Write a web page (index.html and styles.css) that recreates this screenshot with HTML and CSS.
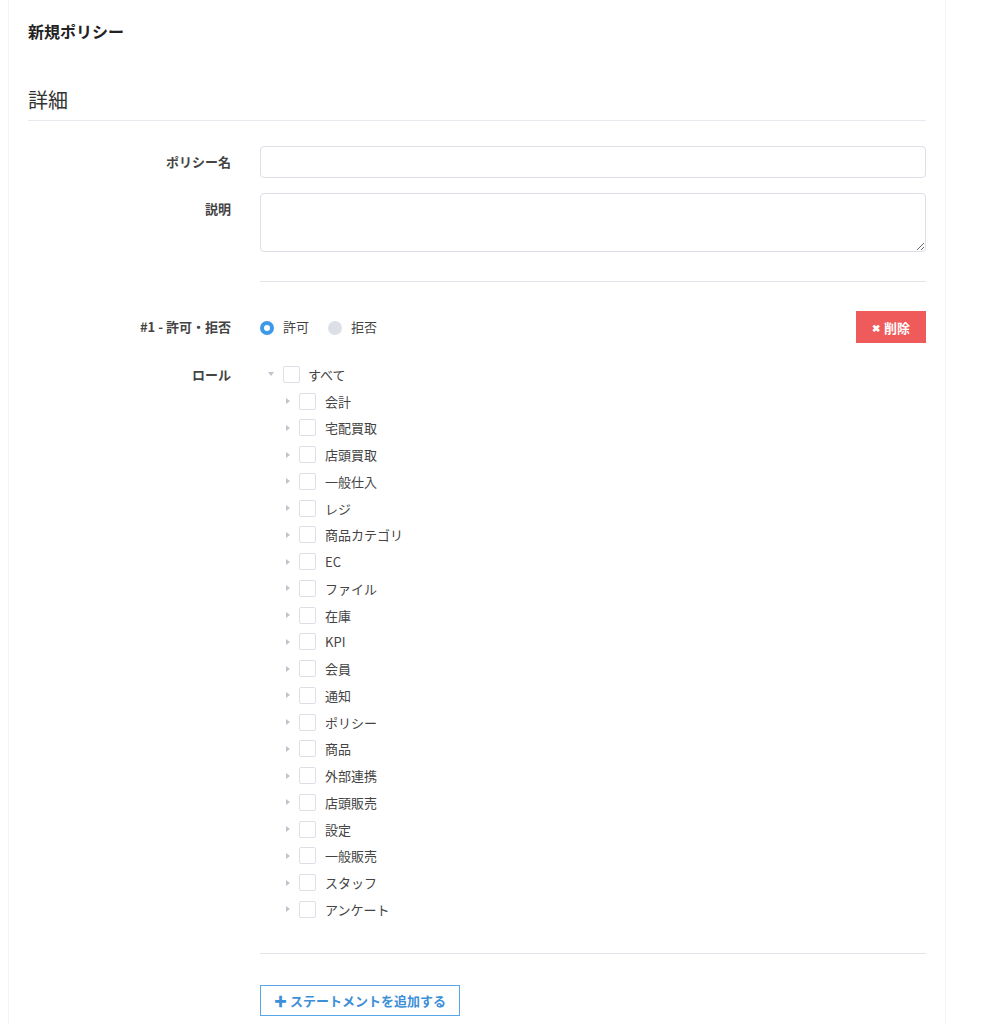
FILE: index.html
```html
<!DOCTYPE html>
<html lang="ja">
<head>
    <meta charset="UTF-8">
    <title>新規ポリシー</title>
    <link rel="stylesheet" href="styles.css">
</head>
<body>
<div class="page">
    <h1 class="page-title">新規ポリシー</h1>

    <h2 class="section-title">詳細</h2>

    <div class="form-row">
        <label class="form-label" for="policy_name">ポリシー名</label>
        <div class="form-field"><input type="text" id="policy_name" class="text-input"></div>
    </div>
    <div class="form-row">
        <label class="form-label" for="policy_desc">説明</label>
        <div class="form-field"><textarea id="policy_desc" class="text-area"></textarea></div>
    </div>

    <div class="form-row">
        <div></div>
        <div class="form-field"><hr class="divider"></div>
    </div>

    <div class="form-row statement-row">
        <div class="form-label">#1 - 許可・拒否</div>
        <div class="form-field effect-line">
            <div class="radios">
                <span class="radio checked"><span class="radio-dot"></span>許可</span>
                <span class="radio"><span class="radio-dot"></span>拒否</span>
            </div>
            <button class="btn-delete"><span class="x">✖</span>削除</button>
        </div>
    </div>

    <div class="form-row role-row">
        <div class="form-label">ロール</div>
        <div class="form-field">
            <div class="tree-node root">
                <span class="caret open"></span><span class="check"></span><span class="node-label">すべて</span>
            </div>
            <div class="tree-children" id="roleTree"></div>
        </div>
    </div>

    <div class="form-row">
        <div></div>
        <div class="form-field"><hr class="divider bottom"></div>
    </div>

    <div class="form-row">
        <div></div>
        <div class="form-field"><button class="btn-add"><span class="plus">✚</span>ステートメントを追加する</button></div>
    </div>
</div>

<script>
    const roles = ['会計', '宅配買取', '店頭買取', '一般仕入', 'レジ', '商品カテゴリ', 'EC', 'ファイル', '在庫', 'KPI',
        '会員', '通知', 'ポリシー', '商品', '外部連携', '店頭販売', '設定', '一般販売', 'スタッフ', 'アンケート'];
    const tree = document.getElementById('roleTree');
    tree.innerHTML = roles.map(name => `
        <div class="tree-node">
            <span class="caret"></span><span class="check"></span><span class="node-label">${name}</span>
        </div>
    `).join('');
</script>
</body>
</html>
```

FILE: styles.css
```css
body {
    margin: 0;
    font-family: "Noto Sans CJK JP", "Noto Sans", sans-serif;
    color: #333;
    background: #fff;
}

.page {
    margin-left: 8px;
    width: 898px;
    min-height: 1024px;
    padding: 0 19px;
    border-left: 1px solid #f4f4f6;
    border-right: 1px solid #f4f4f6;
    box-sizing: content-box;
}

.page-title {
    margin: 0;
    padding-top: 20px;
    font-size: 16px;
    line-height: 22px;
    font-weight: bold;
    color: #222;
}

.section-title {
    margin: 44px 0 0;
    font-size: 20px;
    font-weight: normal;
    line-height: 28px;
    color: #333;
    padding-bottom: 6px;
    border-bottom: 1px solid #e8e8ee;
}

.form-row {
    display: grid;
    grid-template-columns: 203px 1fr;
    column-gap: 29px;
}

.form-row:nth-of-type(1) {
    margin-top: 25px;
}

.form-label {
    text-align: right;
    font-size: 13px;
    font-weight: bold;
    color: #444;
    line-height: 20px;
    padding-top: 6px;
}

.text-input, .text-area {
    display: block;
    width: 100%;
    box-sizing: border-box;
    border: 1px solid #dcdfe6;
    border-radius: 4px;
    font-family: inherit;
    font-size: 13px;
    background: #fff;
}

.text-input {
    height: 32px;
    margin-bottom: 15px;
}

.text-area {
    height: 59px;
    resize: vertical;
}

.divider {
    margin: 29px 0 0;
    border: 0;
    border-top: 1px solid #e4e4ea;
}

.statement-row {
    margin-top: 29px;
}

.effect-line {
    display: flex;
    justify-content: space-between;
    align-items: center;
}

.radios {
    display: flex;
    gap: 19px;
    font-size: 13px;
    line-height: 16px;
    color: #444;
}

.radio {
    display: flex;
    align-items: center;
}

.radio-dot {
    width: 14px;
    height: 14px;
    border-radius: 50%;
    background: #dcdfe6;
    margin-right: 9px;
    box-sizing: border-box;
    position: relative;
    top: 1px;
}

.radio.checked .radio-dot {
    background: #fff;
    border: 4px solid #3d99e8;
}

.btn-delete {
    width: 70px;
    height: 32px;
    background: #ef5a5a;
    color: #fff;
    border: none;
    font-family: inherit;
    font-size: 13px;
    font-weight: bold;
    padding: 0;
    cursor: pointer;
}

.btn-delete .x {
    font-size: 10px;
    margin-right: 4px;
    position: relative;
    top: -1px;
}

.role-row {
    margin-top: 18px;
}

.role-row .form-label {
    padding-top: 4px;
}

.tree-node {
    display: flex;
    align-items: center;
    height: 26.75px;
    font-size: 13px;
    color: #444;
}

.tree-node.root {
    padding-left: 8px;
}

.tree-children .tree-node {
    padding-left: 26px;
}

.caret {
    width: 0;
    height: 0;
    border-top: 3.5px solid transparent;
    border-bottom: 3.5px solid transparent;
    border-left: 4px solid #c0c4cc;
    margin-right: 9px;
}

.caret.open {
    border-left: 3.5px solid transparent;
    border-right: 3.5px solid transparent;
    border-top: 4px solid #c0c4cc;
    border-bottom: 0;
    margin-right: 9px;
}

.check {
    width: 17px;
    height: 17px;
    box-sizing: border-box;
    border: 1px solid #dcdfe6;
    border-radius: 2px;
    margin-right: 8px;
}

.tree-children .check {
    margin-right: 9px;
}

.divider.bottom {
    margin-top: 30px;
}

.btn-add {
    margin-top: 31px;
    height: 31px;
    padding: 0 13px;
    background: #fff;
    border: 1px solid #5aa5e6;
    color: #3d8fd8;
    font-family: inherit;
    font-size: 13px;
    font-weight: bold;
    cursor: pointer;
}

.btn-add .plus {
    margin-right: 3px;
}
```
